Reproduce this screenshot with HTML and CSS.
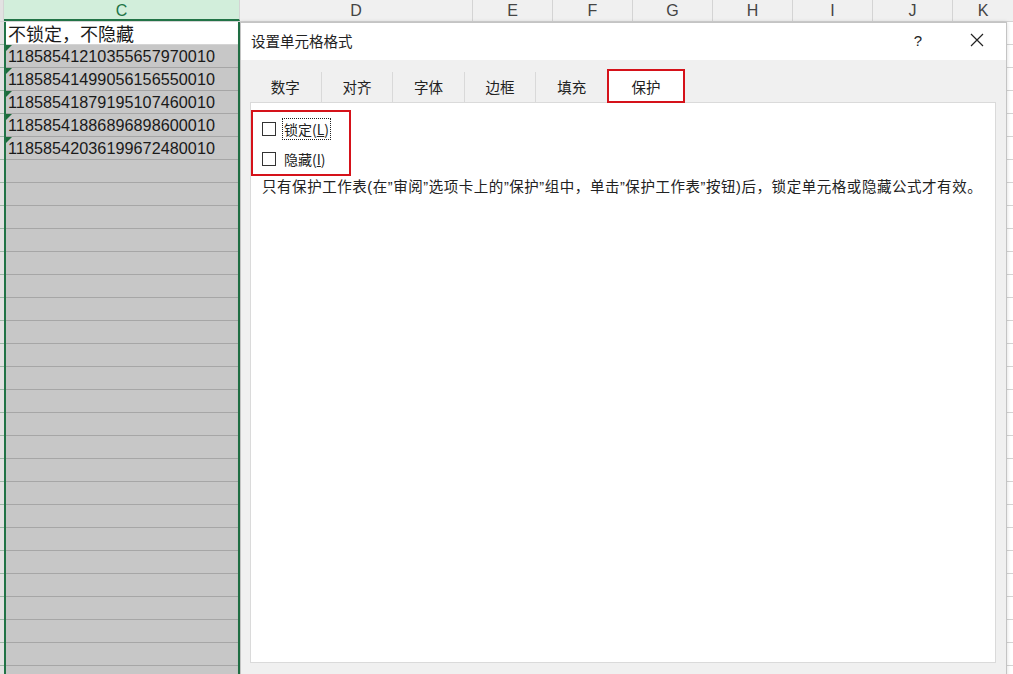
FILE: index.html
```html
<!DOCTYPE html>
<html lang="zh-CN">
<head>
    <meta charset="UTF-8">
    <title>设置单元格格式</title>
    <link rel="stylesheet" href="styles.css">
</head>
<body>

<div class="sheet">
    <div class="col-head">
        <div class="hd stub"></div>
        <div class="hd hd-c">C</div>
        <div class="hd hd-d">D</div>
        <div class="hd hd-n">E</div>
        <div class="hd hd-n">F</div>
        <div class="hd hd-n">G</div>
        <div class="hd hd-n">H</div>
        <div class="hd hd-n">I</div>
        <div class="hd hd-n">J</div>
        <div class="hd hd-k">K</div>
    </div>
    <div class="sheet-body">
        <div class="row-stub"></div>
        <div class="col-c">
            <div class="cell active">不锁定，不隐藏</div>
            <div class="cell num">11858541210355657970010</div>
            <div class="cell num">11858541499056156550010</div>
            <div class="cell num">11858541879195107460010</div>
            <div class="cell num">11858541886896898600010</div>
            <div class="cell num">11858542036199672480010</div>
            <div class="cell-fill"></div>
        </div>
        <div class="col-rest"></div>
    </div>
</div>

<!-- 对话框 -->
<div class="dialog">
    <div class="dlg-title">
        <span class="dlg-name">设置单元格格式</span>
        <span class="dlg-help">?</span>
        <span class="dlg-close">
            <svg width="14" height="14" viewBox="0 0 14 14"><path d="M1 1L13 13M13 1L1 13" stroke="#222" stroke-width="1.2" fill="none"/></svg>
        </span>
    </div>
    <div class="dlg-body">
        <div class="tabs">
            <div class="tab">数字</div>
            <div class="tab">对齐</div>
            <div class="tab">字体</div>
            <div class="tab">边框</div>
            <div class="tab">填充</div>
            <div class="tab selected">保护</div>
        </div>
        <div class="panel">
            <div class="mark-box">
                <label class="check">
                    <span class="box"></span>
                    <span class="lbl focus">锁定(<u>L</u>)</span>
                </label>
                <label class="check">
                    <span class="box"></span>
                    <span class="lbl">隐藏(<u>I</u>)</span>
                </label>
            </div>
            <p class="note">只有保护工作表(在”审阅”选项卡上的”保护”组中，单击”保护工作表”按钮)后，锁定单元格或隐藏公式才有效。</p>
        </div>
    </div>
</div>

</body>
</html>
```

FILE: styles.css
```css
/* planilha de fundo */
body {
    margin: 0;
    width: 1013px;
    height: 674px;
    overflow: hidden;
    position: relative;
    background: #fff;
    font-family: "Noto Sans CJK SC", sans-serif;
    color: #222;
}
.col-head {
    display: flex;
    height: 22px;
    background: #f0f0f0;
    border-bottom: 1px solid #d4d4d4;
    box-sizing: border-box;
}
.hd {
    box-sizing: border-box;
    border-right: 1px solid #d4d4d4;
    font-family: "Liberation Sans", sans-serif;
    font-size: 16px;
    line-height: 22px;
    text-align: center;
    color: #444;
}
.stub {
    width: 4px;
    background: #e2e2e2;
}
.hd-c {
    width: 236px;
    background: #d2eedb;
    color: #217346;
    border-bottom: 2px solid #217346;
}
.hd-d { width: 233px; }
.hd-n { width: 80px; }
.hd-k { flex: 1; border-right: none; }

.sheet-body {
    display: flex;
    height: 652px;
}
.row-stub {
    width: 4px;
    background: repeating-linear-gradient(to bottom, #e2e2e2 0, #e2e2e2 22px, #9fb9a8 22px, #9fb9a8 23px);
}
.col-c {
    width: 236px;
    box-sizing: border-box;
    border-left: 2px solid #217346;
    border-right: 2px solid #217346;
    display: flex;
    flex-direction: column;
}
.cell {
    height: 23px;
    flex-shrink: 0;
    box-sizing: border-box;
    border-bottom: 1px solid #a6a6a6;
    background: #c7c7c7;
    padding: 1px 0 0 2px;
    font-size: 18px;
    line-height: 21px;
    white-space: nowrap;
    position: relative;
    color: #1a1a1a;
}
.cell.active {
    background: #fff;
    border-bottom-color: #d4d4d4;
}
.cell.num {
    font-family: "Liberation Sans", sans-serif;
    font-size: 16.2px;
    letter-spacing: 0.05px;
}
/* triangulo verde de erro */
.cell.num::before {
    content: "";
    position: absolute;
    left: 0;
    top: 0;
    border-top: 6px solid #1d6b3c;
    border-right: 6px solid transparent;
}
.cell-fill {
    flex: 1;
    background: repeating-linear-gradient(to bottom, #c7c7c7 0, #c7c7c7 22px, #a6a6a6 22px, #a6a6a6 23px);
}
.col-rest {
    flex: 1;
    background: repeating-linear-gradient(to bottom, #fff 0, #fff 22px, #d4d4d4 22px, #d4d4d4 23px);
}

/* dialogo */
.dialog {
    position: absolute;
    left: 240px;
    top: 22px;
    width: 767px;
    height: 670px;
    box-sizing: border-box;
    border: 1px solid #c4c4c4;
    background: #f0f0f0;
    box-shadow: 0 0 4px rgba(0, 0, 0, 0.15);
    display: flex;
    flex-direction: column;
}
.dlg-title {
    height: 37px;
    box-sizing: border-box;
    padding: 0 0 3px 10px;
    background: #fff;
    display: flex;
    align-items: center;
    flex-shrink: 0;
}
.dlg-name {
    font-size: 14.5px;
    flex: 1;
}
.dlg-help {
    font-family: "Liberation Sans", sans-serif;
    font-size: 15px;
    width: 20px;
    text-align: center;
}
.dlg-close {
    width: 14px;
    height: 14px;
    margin: 0 22px 0 42px;
    display: flex;
}
.dlg-body {
    flex: 1;
    padding: 9px 10px 0 9px;
    display: flex;
    flex-direction: column;
}
.tabs {
    display: flex;
    height: 33px;
    align-items: flex-end;
}
.tab {
    width: 71.6px;
    height: 30px;
    box-sizing: border-box;
    border-right: 1px solid #d9d9d9;
    font-size: 14.5px;
    line-height: 30px;
    text-align: center;
    color: #222;
}
.tab.selected {
    width: 78px;
    height: 34px;
    line-height: 32px;
    background: #fff;
    border: 2px solid #d5121a;
    margin: 0 0 -1px -1px;
    position: relative;
}
.panel {
    width: 746px;
    height: 561px;
    box-sizing: border-box;
    background: #fff;
    border: 1px solid #dadada;
}
.mark-box {
    width: 100px;
    height: 66px;
    box-sizing: border-box;
    border: 2px solid #d5121a;
    margin: 7px 0 0 0;
    padding: 6px 0 0 9px;
    display: flex;
    flex-direction: column;
    gap: 8px;
}
.check {
    display: flex;
    align-items: center;
    height: 22px;
    font-size: 14px;
}
.box {
    width: 14px;
    height: 14px;
    box-sizing: border-box;
    border: 1px solid #333;
    margin-right: 6px;
}
.lbl {
    padding: 0 1px;
    line-height: 20px;
    border: 1px dotted transparent;
}
.lbl.focus {
    border-color: #222;
}
.note {
    margin: 1px 0 0 11px;
    font-family: "Liberation Sans", "Noto Sans CJK SC", sans-serif;
    font-size: 14.5px;
    letter-spacing: 0.55px;
    line-height: 20px;
    white-space: nowrap;
}
```
